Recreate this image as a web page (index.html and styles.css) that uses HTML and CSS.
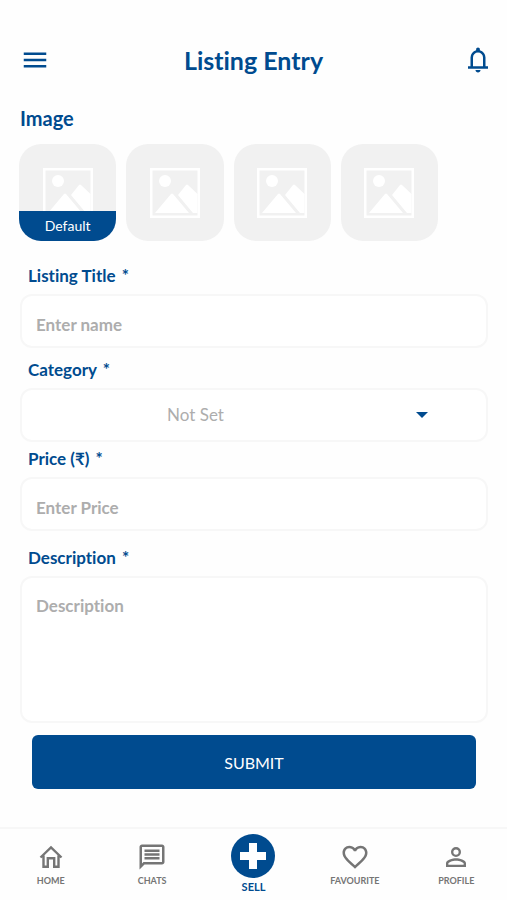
FILE: index.html
```html
<!DOCTYPE html>
<html lang="en">
<head>
<meta charset="utf-8">
<meta name="viewport" content="width=device-width, initial-scale=1">
<title>Listing Entry</title>
<link rel="stylesheet" href="styles.css">
</head>
<body>
<svg class="defs" aria-hidden="true">
  <symbol id="picture" viewBox="0 0 50 50">
    <path fill="#fff" fill-rule="evenodd" d="M0 0h50v50H0zM2.500 2.500v45h45v-45z"/>
    <circle cx="15" cy="13" r="6" fill="#fff"/>
    <path fill="#fff" d="M5 45 21 26q1-1 2 0l16 19zM28 27l8-10q1-1 2 0l9.500 9v19H43z"/>
  </symbol>
</svg>
<header class="topbar">
  <button class="icon-button" type="button" aria-label="Menu">
    <svg viewBox="0 0 24 24"><path d="M3 18h18v-2H3v2zm0-5h18v-2H3v2zm0-7v2h18V6H3z"/></svg>
  </button>
  <h1>Listing Entry</h1>
  <button class="icon-button" type="button" aria-label="Notifications">
    <svg viewBox="0 -960 960 960"><path d="M160-200v-80h80v-280q0-83 50-147.500T420-792v-28q0-25 17.500-42.500T480-880t42.500 17.500T540-820v28q80 20 130 84.500T720-560v280h80v80H160Zm320 120q-33 0-56.500-23.500T400-160h160q0 33-23.500 56.500T480-80ZM320-280h320v-280q0-66-47-113t-113-47q-66 0-113 47t-47 113v280Z"/></svg>
  </button>
</header>
<main>
  <form class="listing">
    <h2>Image</h2>
    <div class="photos">
      <button class="photo" type="button" aria-label="Default image"><svg><use href="#picture"/></svg><span class="tag">Default</span></button>
      <button class="photo" type="button" aria-label="Image 2"><svg><use href="#picture"/></svg></button>
      <button class="photo" type="button" aria-label="Image 3"><svg><use href="#picture"/></svg></button>
      <button class="photo" type="button" aria-label="Image 4"><svg><use href="#picture"/></svg></button>
    </div>
    <div class="field">
      <label for="title">Listing Title <span class="required">*</span></label>
      <input class="control" id="title" type="text" placeholder="Enter name">
    </div>
    <div class="field">
      <label for="category">Category <span class="required">*</span></label>
      <div class="picker">
        <select class="control" id="category"><option>Not Set</option></select>
        <svg class="arrow" viewBox="0 0 12 6" aria-hidden="true"><path d="M0 0h12L6 6z"/></svg>
      </div>
    </div>
    <div class="field field-price">
      <label for="price">Price (₹) <span class="required">*</span></label>
      <input class="control" id="price" type="text" inputmode="decimal" placeholder="Enter Price">
    </div>
    <div class="field field-description">
      <label for="description">Description <span class="required">*</span></label>
      <textarea class="control" id="description" placeholder="Description"></textarea>
    </div>
    <button class="submit" type="submit">SUBMIT</button>
  </form>
</main>
<nav class="tabs">
  <a class="tab" href="#home">
    <svg viewBox="0 0 30 30"><path fill="none" stroke="currentColor" stroke-width="2.400" d="M4.500 15.500 15 5.500l10.500 10M7.500 13.500v11.300h4.300v-8.500h6.400v8.500h4.300V13.500"/></svg>
    HOME
  </a>
  <a class="tab" href="#chats">
    <svg viewBox="0 0 24 24"><path d="M4 4h16v12H5.170L4 17.170V4m0-2c-1.100 0-1.990.9-1.990 2L2 22l4-4h14c1.100 0 2-.9 2-2V4c0-1.100-.9-2-2-2H4zm2 10h12v2H6v-2zm0-3h12v2H6V9zm0-3h12v2H6V6z"/></svg>
    CHATS
  </a>
  <a class="tab tab-sell" href="#sell" aria-current="page">
    <svg viewBox="0 0 44 44"><circle cx="22" cy="22" r="22"/><path fill="#fff" d="M18 9h8v9h9v8h-9v9h-8v-9H9v-8h9z"/></svg>
    SELL
  </a>
  <a class="tab" href="#favourite">
    <svg viewBox="0 0 24 24"><path d="M16.500 3c-1.740 0-3.410.81-4.500 2.090C10.910 3.810 9.240 3 7.500 3 4.420 3 2 5.420 2 8.500c0 3.780 3.400 6.860 8.550 11.540L12 21.350l1.450-1.320C18.600 15.360 22 12.280 22 8.500 22 5.420 19.580 3 16.500 3zm-4.400 15.550-.1.100-.1-.1C7.140 14.240 4 11.390 4 8.500 4 6.500 5.500 5 7.500 5c1.540 0 3.040.99 3.570 2.360h1.870C13.460 5.990 14.960 5 16.500 5c2 0 3.500 1.500 3.500 3.500 0 2.890-3.140 5.740-7.900 10.050z"/></svg>
    FAVOURITE
  </a>
  <a class="tab" href="#profile">
    <svg viewBox="0 0 24 24"><path d="M12 5.900a2.100 2.100 0 1 1 0 4.200 2.100 2.100 0 0 1 0-4.200m0 9c2.970 0 6.100 1.460 6.100 2.100v1.100H5.900V17c0-.64 3.130-2.100 6.100-2.100M12 4a4 4 0 1 0 0 8 4 4 0 0 0 0-8zm0 9c-2.670 0-8 1.340-8 4v3h16v-3c0-2.660-5.330-4-8-4z"/></svg>
    PROFILE
  </a>
</nav>
</body>
</html>
```
FILE: styles.css
```css
:root {
  --blue: #004b8f;
  --line: #f7f7f7;
  --hint: #adadad;
}

* { box-sizing: border-box; }

body {
  margin: 0;
  min-height: 100vh;
  display: flex;
  flex-direction: column;
  background: #fefefe;
  color: var(--blue);
  font-family: Lato, "Noto Sans", sans-serif;
  font-variant-ligatures: none;
}

button, input, select, textarea { font: inherit; font-variant-ligatures: none; }
button { border: 0; padding: 0; cursor: pointer; }
.defs { display: none; }

.topbar {
  display: flex;
  align-items: center;
  justify-content: space-between;
  padding: 40px 14px 0 20px;
}
.icon-button { width: 30px; height: 40px; background: none; display: flex; align-items: center; }
.icon-button svg { width: 30px; height: 30px; fill: var(--blue); }
h1 { flex: 1; margin: 0; padding-right: 6px; text-align: center; font-size: 25px; line-height: 40px; font-weight: 700; }
h2 { margin: 0; font-size: 20px; line-height: 24px; font-weight: 700; }

main { flex: 1; }
.listing { display: flex; flex-direction: column; padding: 26px 19px 38px 20px; }

.photos {
  display: grid;
  grid-template-columns: repeat(4, 1fr);
  gap: 10px;
  margin: 14px 50px 23px -1px;
}
.photo {
  position: relative;
  aspect-ratio: 1;
  display: grid;
  place-items: center;
  overflow: hidden;
  border-radius: 22px;
  background: #f1f1f1;
}
.photo svg { width: 50px; height: 50px; }
.tag {
  position: absolute;
  inset: auto 0 0;
  background: var(--blue);
  color: #fff;
  font-size: 14px;
  line-height: 30px;
}

.field { display: flex; flex-direction: column; gap: 6px; margin-bottom: 10px; }
.field label { padding-left: 8px; font-size: 17px; line-height: 24px; font-weight: 700; }
.required { padding-left: 2px; }
.field-price { margin: -5px 0 15px; }
.field-description { margin-bottom: 12px; }

.control {
  display: block;
  width: 100%;
  height: 54px;
  margin: 0;
  padding: 6px 14px 0;
  border: 2px solid var(--line);
  border-radius: 12px;
  background: #fff;
  color: var(--blue);
  font-size: 17px;
  font-weight: 700;
  line-height: 24px;
  outline: 0;
}
.control::placeholder { color: var(--hint); opacity: 1; }
.control:focus { border-color: var(--blue); }
textarea.control { height: 147px; padding-top: 16px; resize: none; }

.picker { position: relative; }
select.control {
  appearance: none;
  padding: 0 25% 0 0;
  color: var(--hint);
  font-weight: 400;
  text-align: center;
  text-align-last: center;
}
.arrow {
  position: absolute;
  top: 24px;
  right: 60px;
  width: 12px;
  height: 6px;
  fill: var(--blue);
  pointer-events: none;
}

.submit {
  height: 54px;
  margin: 0 12px;
  border-radius: 6px;
  background: var(--blue);
  color: #fff;
  font-size: 16px;
}

.tabs {
  display: grid;
  grid-template-columns: repeat(5, 1fr);
  height: 74px;
  border-top: 2px solid var(--line);
}
.tab {
  display: flex;
  flex-direction: column;
  align-items: center;
  gap: 3px;
  padding-top: 13px;
  color: #757575;
  font-size: 9px;
  line-height: 12px;
  font-weight: 700;
  text-decoration: none;
}
.tab svg { width: 30px; height: 30px; fill: currentColor; }
.tab-sell { padding-top: 5px; color: var(--blue); font-size: 11px; }
.tab-sell svg { width: 44px; height: 44px; }
```
